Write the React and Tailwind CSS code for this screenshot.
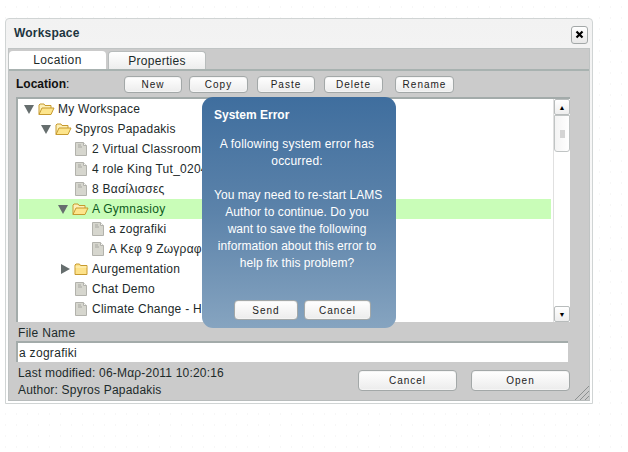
const font = "[font-family:'Liberation_Sans',Arial,sans-serif]";

function Arrow({ open }) {
  return (
    <svg width="10" height="10" viewBox="0 0 10 10" className="shrink-0">
      {open ? <path d="M0 1 H10 L5 10 Z" fill="#666e6e" /> : <path d="M1 0 V10 L10 5 Z" fill="#666e6e" />}
    </svg>
  );
}

function OpenFolder() {
  return (
    <svg width="17" height="13" viewBox="0 0 17 13" className="shrink-0">
      <path d="M1 11.5 V2 L2 1 H6 L7 2.5 H13 V5" fill="#fdf0b8" stroke="#c79a2e" />
      <path d="M1 11.5 L4 5 H16 L13 11.5 Z" fill="#fde58c" stroke="#c79a2e" strokeLinejoin="round" />
    </svg>
  );
}

function ClosedFolder() {
  return (
    <svg width="14" height="13" viewBox="0 0 14 13" className="shrink-0 mr-[1px]">
      <path d="M1 11.5 V2 L2 1 H5.5 L6.5 2.5 H13 V11.5 Z" fill="#fde28a" stroke="#c79a2e" strokeLinejoin="round" />
      <path d="M1.5 4 H12.5" stroke="#fff4c4" />
    </svg>
  );
}

function Doc() {
  return (
    <svg width="12" height="14" viewBox="0 0 12 14" className="shrink-0 mr-[2px]">
      <path d="M0.5 0.5 H8.5 L11.5 3.5 V13.5 H0.5 Z" fill="#d6d6ce" stroke="#b2b2ac" />
      <path d="M8.5 0.5 V3.5 H11.5" fill="#f6f6f2" stroke="#b2b2ac" />
      <path d="M3 3 H6 M3 5 H7" stroke="#a8a8a2" />
    </svg>
  );
}

const rows = [
  { label: "My Workspace", left: 6, arrow: "open", icon: "open" },
  { label: "Spyros Papadakis", left: 23, arrow: "open", icon: "open" },
  { label: "2 Virtual Classroom", left: 57, icon: "doc" },
  { label: "4 role King Tut_0204", left: 57, icon: "doc" },
  { label: "8 Βασίλισσες", left: 57, icon: "doc" },
  { label: "A Gymnasioy", left: 40, arrow: "open", icon: "open", selected: true },
  { label: "a zografiki", left: 74, icon: "doc" },
  { label: "Α Κεφ 9 Ζωγραφική", left: 74, icon: "doc" },
  { label: "Aurgementation", left: 42, arrow: "closed", icon: "closed" },
  { label: "Chat Demo", left: 57, icon: "doc" },
  { label: "Climate Change - Human", left: 57, icon: "doc" },
];

function TreeRow({ row }) {
  return (
    <div
      className={`flex items-center h-5 ml-[1px] mr-[2px] ${row.selected ? "bg-[#c9fdb8] text-[#0d5a20]" : "text-[#1c2a2a]"}`}
      style={{ paddingLeft: row.left - 1 }}
    >
      {row.arrow && <span className="w-[14px]"><Arrow open={row.arrow === "open"} /></span>}
      {row.icon === "open" && <OpenFolder />}
      {row.icon === "closed" && <ClosedFolder />}
      {row.icon === "doc" && <Doc />}
      <span className="ml-[3px] whitespace-nowrap tracking-[0.25px]">{row.label}</span>
    </div>
  );
}

function Btn({ children, className = "", w, h = "h-[17px]" }) {
  return (
    <button className={`${w} ${h} ${className} rounded-[4px] border border-[#a3a8a8] bg-gradient-to-b from-white to-[#ececec] text-[10px] tracking-[1px] text-[#222] shadow-[inset_0_0_0_1px_#f4f4f4]`}>
      {children}
    </button>
  );
}

function ScrollBar() {
  return (
    <div className="w-[17px] flex flex-col border-l border-[#e0e0e0] bg-white">
      <div className="h-[16px] flex items-center justify-center rounded-[2px] border border-[#b8bcbc] bg-gradient-to-b from-white to-[#eee]">
        <span className="text-[7px] leading-none text-black">▲</span>
      </div>
      <div className="h-[37px] flex items-center justify-center rounded-b-[3px] border border-[#c0c4c4] bg-gradient-to-r from-[#f4f4f4] to-white">
        <span className="w-[5px] h-[8px] bg-[#d4d4d4]"></span>
      </div>
      <div className="flex-1"></div>
      <div className="h-[16px] flex items-center justify-center rounded-[2px] border border-[#b8bcbc] bg-gradient-to-b from-white to-[#eee]">
        <span className="text-[7px] leading-none text-black">▼</span>
      </div>
    </div>
  );
}

function ErrorDialog() {
  return (
    <div className="absolute left-[196px] top-[78px] w-[194px] h-[231px] rounded-[11px] bg-gradient-to-b from-[#3f6e9e] via-[#5c83aa] to-[#86a4c0] text-white flex flex-col px-[12px] pt-[11px] pb-[8px]">
      <div className="text-[12px] font-bold leading-[15px]">System Error</div>
      <div className="mt-[13px] mr-[4px] text-center text-[12px] leading-[17px] whitespace-nowrap">
        <p className="tracking-[0.15px]">A following system error has<br />occurred:</p>
        <p className="mt-[17px] tracking-[0.05px]">
          You may need to re-start LAMS<br />
          Author to continue. Do you<br />
          want to save the following<br />
          information about this error to<br />
          help fix this problem?
        </p>
      </div>
      <div className="mt-auto flex justify-center gap-[6px] ml-[7px]">
        <Btn w="w-[64px]" h="h-[20px]">Send</Btn>
        <Btn w="w-[67px]" h="h-[20px]">Cancel</Btn>
      </div>
    </div>
  );
}

export default function App() {
  return (
    <div className={`${font} w-[628px] h-[452px] overflow-hidden pt-[18px] pl-[5px] bg-white bg-[radial-gradient(#eeeeee_0.8px,transparent_0.8px)] bg-[length:11px_11px] bg-[position:0px_1.5px] text-[12px]`}>
      <div className="relative w-[588px] h-[386px] flex flex-col rounded-t-[4px] border border-[#d0d4d4] bg-gradient-to-b from-[#f2f2f2] to-white">
        <div className="h-[28px] shrink-0 flex items-center justify-between pl-[8px] pr-[4px]">
          <span className="text-[12px] font-bold tracking-[0.2px] text-[#1d3540]">Workspace</span>
          <span className="mt-[3px] w-[17px] h-[18px] flex items-center justify-center rounded-[3px] border border-[#a3a8a8] bg-gradient-to-b from-white to-[#e8e8e8]">
            <svg width="9" height="9" viewBox="0 0 9 9"><path d="M1.5 1.5 L7.5 7.5 M7.5 1.5 L1.5 7.5" stroke="#000" strokeWidth="2.2" /></svg>
          </span>
        </div>

        <div className="flex-1 flex flex-col mt-[1px] mx-[2px] mb-[2px] border border-[#c0c4c4] border-b-[#b8bcbc] bg-[#cbcbcb]">
          <div className="h-[22px] shrink-0 flex items-end gap-[2px] border-b-[2px] border-[#a8b2b0] bg-[#cbcbcb]">
            <div className="w-[97px] h-[18px] flex items-center justify-center rounded-t-[4px] bg-white text-[12px] tracking-[0.4px] text-[#1c2a2a]">Location</div>
            <div className="w-[98px] h-[18px] flex items-center justify-center rounded-t-[4px] border border-b-0 border-[#b8bcbc] bg-gradient-to-b from-white to-[#ededed] text-[12px] tracking-[0.3px] text-[#1c2a2a]">Properties</div>
          </div>

          <div className="h-[26px] shrink-0 flex items-center pl-[7px]">
            <span className="w-[108px] text-[12px] text-[#111]"><b>Location</b>:</span>
            <Btn w="w-[58px]">New</Btn>
            <Btn w="w-[59px]" className="ml-[7px]">Copy</Btn>
            <Btn w="w-[58px]" className="ml-[9px]">Paste</Btn>
            <Btn w="w-[59px]" className="ml-[9px]">Delete</Btn>
            <Btn w="w-[59px]" className="ml-[12px]">Rename</Btn>
          </div>

          <div className="ml-[7px] mr-[19px] h-[225px] shrink-0 flex border-t-[2px] border-l-[2px] border-[#a3abaa] bg-white overflow-hidden">
            <div className="flex-1 overflow-hidden">
              {rows.map((row) => <TreeRow key={row.label} row={row} />)}
            </div>
            <ScrollBar />
          </div>

          <div className="mt-[4px] ml-[9px] h-[15px] leading-[15px] tracking-[0.3px] text-[#1c2a2a]">File Name</div>
          <div className="ml-[7px] mr-[21px] h-[21px] shrink-0 flex items-center pl-[1px] border-t-[2px] border-l-[2px] border-[#a3abaa] bg-white tracking-[0.3px] text-[#1c2a2a]">a zografiki</div>

          <div className="flex justify-between pl-[9px] pr-[19px] mt-[3px] text-[#1c2a2a]">
            <div className="leading-[17px] tracking-[0.2px]">
              <div>Last modified: 06-Μαρ-2011 10:20:16</div>
              <div>Author: Spyros Papadakis</div>
            </div>
            <div className="flex gap-[14px] mt-[5px]">
              <Btn w="w-[99px]" h="h-[21px]">Cancel</Btn>
              <Btn w="w-[99px]" h="h-[21px]">Open</Btn>
            </div>
          </div>
        </div>

        <svg width="16" height="16" viewBox="0 0 16 16" className="absolute right-[2px] bottom-[2px]">
          <path d="M1 15 L15 1 M6 15 L15 6 M11 15 L15 11" stroke="#8c9090" />
        </svg>
        <ErrorDialog />
      </div>
    </div>
  );
}
